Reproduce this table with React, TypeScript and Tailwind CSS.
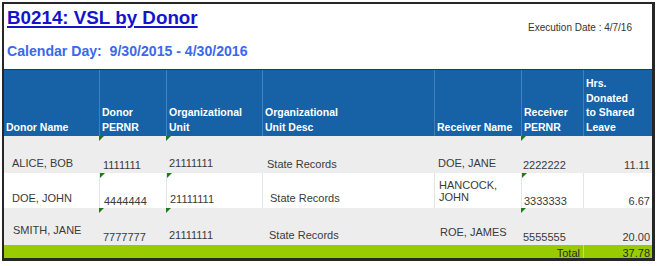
const cols = "grid grid-cols-[95px_67px_96px_172px_87px_62px_69px]";

type Cell = { text: string[]; pb: number; pl?: number; right?: boolean; flag?: boolean };

const rows: { bg: string; h: string; lines: boolean; cells: Cell[] }[] = [
  {
    bg: "bg-[#ededee]",
    h: "h-[37px]",
    lines: false,
    cells: [
      { text: ["ALICE, BOB"], pb: 4, pl: 8 },
      { text: ["1111111"], pb: 2, pl: 4, flag: true },
      { text: ["21111111"], pb: 4, pl: 3, flag: true },
      { text: ["State Records"], pb: 3, pl: 5 },
      { text: ["DOE, JANE"], pb: 4, pl: 4 },
      { text: ["2222222"], pb: 2, pl: 2, flag: true },
      { text: ["11.11"], pb: 2, right: true },
    ],
  },
  {
    bg: "bg-white",
    h: "h-[35px]",
    lines: true,
    cells: [
      { text: ["DOE, JOHN"], pb: 4, pl: 8 },
      { text: ["4444444"], pb: 1, pl: 4, flag: true },
      { text: ["21111111"], pb: 3, pl: 3, flag: true },
      { text: ["State Records"], pb: 4, pl: 7 },
      { text: ["HANCOCK,", "JOHN"], pb: 5, pl: 4 },
      { text: ["3333333"], pb: 1, pl: 2, flag: true },
      { text: ["6.67"], pb: 1, right: true },
    ],
  },
  {
    bg: "bg-[#ededee]",
    h: "h-[37px]",
    lines: false,
    cells: [
      { text: ["SMITH, JANE"], pb: 9, pl: 9 },
      { text: ["7777777"], pb: 2, pl: 4, flag: true },
      { text: ["21111111"], pb: 4, pl: 3, flag: true },
      { text: ["State Records"], pb: 4, pl: 7 },
      { text: ["ROE, JAMES"], pb: 7, pl: 6 },
      { text: ["5555555"], pb: 2, pl: 2, flag: true },
      { text: ["20.00"], pb: 2, right: true },
    ],
  },
];

const headers = [
  ["Donor Name"],
  ["Donor", "PERNR"],
  ["Organizational", "Unit"],
  ["Organizational", "Unit Desc"],
  ["Receiver Name"],
  ["Receiver", "PERNR"],
  ["Hrs.", "Donated", "to Shared", "Leave"],
];

export default function App() {
  return (
    <div className="h-[266px] w-[660px] bg-white pl-[2px] pt-[2px] font-['Liberation_Sans',Arial,sans-serif]">
      <div className="w-[653px] border-2 border-r-[3px] border-b-[3px] border-[#262626] bg-white">
        {/* report heading */}
        <div className="h-[65px] pl-[3px]">
          <div className="flex items-start justify-between pt-[3px] pr-[20px]">
            <h1 className="text-[18.8px] font-bold leading-[22px] text-[#1414cc] underline decoration-2 underline-offset-2">
              B0214: VSL by Donor
            </h1>
            <span className="mt-[15px] text-[10px] leading-[12px] text-[#333]">Execution Date : 4/7/16</span>
          </div>
          <p className="mt-[9px] text-[14.1px] font-bold leading-[17px] text-[#3a68ee]">
            Calendar Day:&nbsp; 9/30/2015 - 4/30/2016
          </p>
        </div>

        {/* column headers */}
        <div className={`${cols} h-[67px] border-t border-[#0e3f72] bg-[#1762a6]`}>
          {headers.map((h, i) => (
            <div
              key={i}
              className={`flex flex-col justify-end pb-[2px] text-[10.5px] font-bold leading-[14.5px] text-white ${
                i === 0 ? "pl-[2px]" : "border-l border-[#3f80bf] pl-[2px]"
              }`}
            >
              {h.map((line) => (
                <span key={line} className="whitespace-nowrap">
                  {line}
                </span>
              ))}
            </div>
          ))}
        </div>

        {/* data rows */}
        {rows.map((row, r) => (
          <div key={r} className={`${cols} ${row.h} ${row.bg}`}>
            {row.cells.map((c, i) => (
              <div
                key={i}
                style={{ paddingBottom: c.pb, paddingLeft: c.pl ?? 0 }}
                className={`relative flex flex-col justify-end text-[11px] leading-[12px] text-[#3a3a3a] ${
                  c.right ? "items-end pr-[2px]" : ""
                } ${row.lines && i > 0 ? "border-l border-[#e4e4e4]" : ""}`}
              >
                {c.flag && (
                  <span className="absolute left-0 top-0 h-0 w-0 border-t-[5px] border-r-[5px] border-t-[#1d7a1d] border-r-transparent" />
                )}
                {c.text.map((t) => (
                  <span key={t} className="whitespace-nowrap">
                    {t}
                  </span>
                ))}
              </div>
            ))}
          </div>
        ))}

        {/* total row */}
        <div className="grid h-[13px] grid-cols-[579px_69px] overflow-hidden bg-[#99cc00] text-[11px] leading-[12px] text-[#2a2a2a]">
          <div className="pr-[3px] pt-[2px] text-right">Total</div>
          <div className="border-l border-[#c0e25a] pr-[2px] pt-[2px] text-right">37.78</div>
        </div>
      </div>
    </div>
  );
}
